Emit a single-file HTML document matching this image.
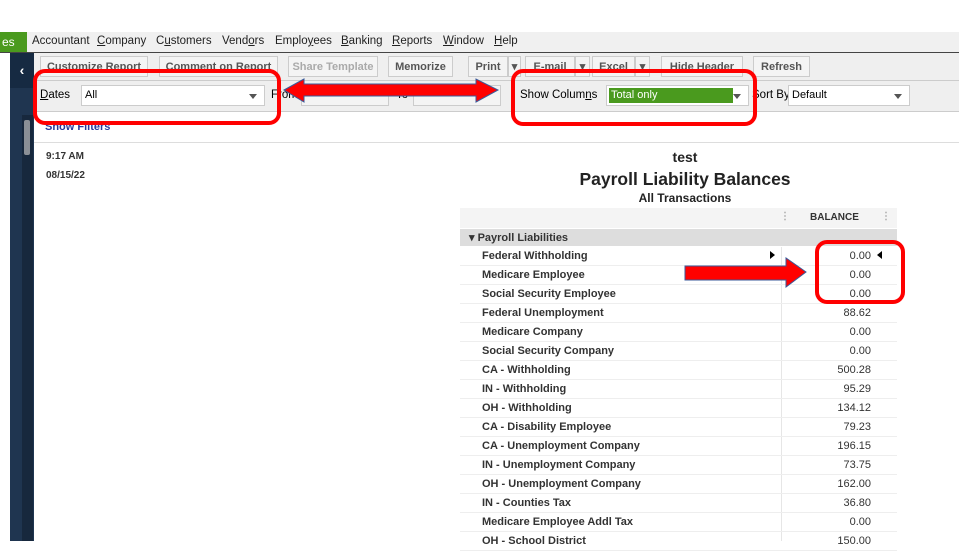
<!DOCTYPE html>
<html><head><style>
body{margin:0;width:959px;height:541px;background:#fff;position:relative;overflow:hidden;font-family:"Liberation Sans",Arial,sans-serif;}
.a{position:absolute}
.menu{top:32px;left:0;width:959px;height:20px;background:#f0f0f0;border-bottom:1px solid #444;font-size:11.5px;}
.menu span{position:absolute;top:3px;color:#222}
.btn{position:absolute;top:56px;height:21px;border:1px solid #ccc;background:#f4f4f4;font-size:11px;font-weight:bold;color:#555;text-align:center;line-height:21px;box-sizing:border-box}
.sel{position:absolute;height:21px;border:1px solid #ccc;background:#fff;font-size:11px;line-height:19px;box-sizing:border-box;padding-left:3px}
.sel i{position:absolute;right:7px;top:8px;border:4px solid transparent;border-top:5px solid #555;border-bottom:0}
.lbl{position:absolute;top:89px;font-size:11.5px}
.row{position:absolute;left:460px;width:437px;height:19px;border-bottom:1px solid #eee;font-size:11px;font-weight:bold;color:#333;box-sizing:border-box}
.row b{position:absolute;left:22px;top:3px}
.row s{position:absolute;right:26px;top:3px;text-decoration:none;font-weight:normal}
.red{position:absolute;border:4px solid #f00;border-radius:12px;box-sizing:border-box}
</style></head><body>
<div class="a menu">
<div class="a" style="left:0;top:0;width:27px;height:20px;background:#4a9a1e;color:#fff;font-size:12px;line-height:20px;padding-left:2px;box-sizing:border-box">es</div>
<span style="left:32px">Accountant</span><span style="left:97px"><u>C</u>ompany</span><span style="left:156px">C<u>u</u>stomers</span><span style="left:222px">Vend<u>o</u>rs</span><span style="left:275px">Emplo<u>y</u>ees</span><span style="left:341px"><u>B</u>anking</span><span style="left:392px"><u>R</u>eports</span><span style="left:443px"><u>W</u>indow</span><span style="left:494px"><u>H</u>elp</span>
</div>
<div class="a" style="left:10px;top:53px;width:24px;height:488px;background:#1f3550"></div>
<div class="a" style="left:10px;top:53px;width:24px;height:35px;background:#162a42;color:#fff;font-size:14px;font-weight:bold;text-align:center;line-height:35px">‹</div>
<div class="a" style="left:22px;top:115px;width:11px;height:426px;background:#17283d"></div>
<div class="a" style="left:24px;top:120px;width:6px;height:35px;background:#8a8f96;border-radius:2px"></div>
<div class="a" style="left:34px;top:53px;width:925px;height:58px;background:#efefef;border-bottom:1px solid #ccc"></div>
<div class="a" style="left:34px;top:80px;width:925px;height:1px;background:#ccc"></div>
<div class="btn" style="left:40px;width:108px">Customize Report</div>
<div class="btn" style="left:159px;width:119px">Comment on Report</div>
<div class="btn" style="left:288px;width:90px;color:#aaa">Share Template</div>
<div class="btn" style="left:388px;width:65px">Memorize</div>
<div class="btn" style="left:468px;width:40px">Print</div><div class="btn" style="left:508px;width:13px">▾</div>
<div class="btn" style="left:525px;width:50px">E-mail</div><div class="btn" style="left:575px;width:15px">▾</div>
<div class="btn" style="left:592px;width:43px">Excel</div><div class="btn" style="left:635px;width:15px">▾</div>
<div class="btn" style="left:661px;width:82px">Hide Header</div>
<div class="btn" style="left:753px;width:57px">Refresh</div>
<div class="lbl" style="left:40px"><u>D</u>ates</div>
<div class="sel" style="left:81px;top:85px;width:184px">All<i></i></div>
<div class="lbl" style="left:271px">From</div>
<div class="sel" style="left:301px;top:85px;width:88px;background:#f4f4f4"></div>
<div class="lbl" style="left:396px">To</div>
<div class="sel" style="left:413px;top:85px;width:88px;background:#f4f4f4"></div>
<div class="lbl" style="left:520px">Show Colum<u>n</u>s</div>
<div class="sel" style="left:606px;top:85px;width:143px"><div class="a" style="left:2px;top:2px;width:122px;height:15px;background:#4a9a1e;color:#fff;padding-left:2px;line-height:15px">Total only</div><i></i></div>
<div class="lbl" style="left:752px">Sort By</div>
<div class="sel" style="left:788px;top:85px;width:122px">Default<i></i></div>
<div class="a" style="left:45px;top:121px;font-size:11px;font-weight:bold;color:#2a3a9a">Show Filters</div>
<div class="a" style="left:34px;top:142px;width:925px;height:1px;background:#ddd"></div>
<div class="a" style="left:46px;top:151px;font-size:10px;font-weight:bold;color:#333">9:17 AM</div>
<div class="a" style="left:46px;top:170px;font-size:10px;font-weight:bold;color:#333">08/15/22</div>
<div class="a" style="left:460px;top:149px;width:450px;text-align:center;font-size:14px;font-weight:bold;color:#222">test</div>
<div class="a" style="left:460px;top:169px;width:450px;text-align:center;font-size:17.5px;font-weight:bold;color:#222">Payroll Liability Balances</div>
<div class="a" style="left:460px;top:191px;width:450px;text-align:center;font-size:12px;font-weight:bold;color:#222">All Transactions</div>
<div class="a" style="left:460px;top:208px;width:437px;height:20px;background:#f4f4f4;font-size:10px;font-weight:bold;color:#333"><span class="a" style="left:350px;top:4px">BALANCE</span><span class="a" style="left:320px;top:3px;color:#aaa">⋮</span><span class="a" style="left:421px;top:3px;color:#aaa">⋮</span></div>
<div class="a" style="left:460px;top:229px;width:437px;height:17px;background:#ddd;font-size:11px;font-weight:bold;color:#333"><span class="a" style="left:9px;top:2px">▾ Payroll Liabilities</span></div>
<div class="a" style="left:781px;top:247px;width:1px;height:294px;background:#e6e6e6"></div>
<div class="row" style="top:247px"><b>Federal Withholding</b><s>0.00</s></div>
<div class="row" style="top:266px"><b>Medicare Employee</b><s>0.00</s></div>
<div class="row" style="top:285px"><b>Social Security Employee</b><s>0.00</s></div>
<div class="row" style="top:304px"><b>Federal Unemployment</b><s>88.62</s></div>
<div class="row" style="top:323px"><b>Medicare Company</b><s>0.00</s></div>
<div class="row" style="top:342px"><b>Social Security Company</b><s>0.00</s></div>
<div class="row" style="top:361px"><b>CA - Withholding</b><s>500.28</s></div>
<div class="row" style="top:380px"><b>IN - Withholding</b><s>95.29</s></div>
<div class="row" style="top:399px"><b>OH - Withholding</b><s>134.12</s></div>
<div class="row" style="top:418px"><b>CA - Disability Employee</b><s>79.23</s></div>
<div class="row" style="top:437px"><b>CA - Unemployment Company</b><s>196.15</s></div>
<div class="row" style="top:456px"><b>IN - Unemployment Company</b><s>73.75</s></div>
<div class="row" style="top:475px"><b>OH - Unemployment Company</b><s>162.00</s></div>
<div class="row" style="top:494px"><b>IN - Counties Tax</b><s>36.80</s></div>
<div class="row" style="top:513px"><b>Medicare Employee Addl Tax</b><s>0.00</s></div>
<div class="row" style="top:532px"><b>OH - School District</b><s>150.00</s></div>
<div class="a" style="left:770px;top:251px;border:4px solid transparent;border-left:5px solid #000;border-right:0"></div>
<div class="a" style="left:877px;top:251px;border:4px solid transparent;border-right:5px solid #000;border-left:0"></div>
<div class="red" style="left:33px;top:69px;width:248px;height:56px"></div>
<div class="red" style="left:511px;top:69px;width:246px;height:57px"></div>
<div class="red" style="left:815px;top:240px;width:90px;height:64px"></div>
<svg class="a" style="left:0;top:0" width="959" height="541">
<polygon points="284,90 304,79 304,84 476,84 476,79 498,90 476,102 476,96 304,96 304,102" fill="#f00" stroke="#3a5a9a" stroke-width="1"/>
<polygon points="685,266 786,266 786,258 806,272 786,287 786,280 685,280" fill="#f00" stroke="#3a5a9a" stroke-width="1"/>
</svg>
</body></html>
